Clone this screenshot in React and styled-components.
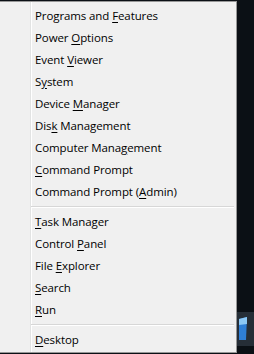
import React from "react";
import styled, { createGlobalStyle } from "styled-components";

const GlobalStyle = createGlobalStyle`
	html, body {
		margin: 0;
		padding: 0;
		background: #0b1015;
	}
	body {
		width: 254px;
		height: 354px;
		overflow: hidden;
	}
`;

const groups = [
	[
		["Programs and ", "F", "eatures"],
		["Power ", "O", "ptions"],
		["Event ", "V", "iewer"],
		["S", "y", "stem"],
		["Device ", "M", "anager"],
		["Dis", "k", " Management"],
		["Computer Mana", "g", "ement"],
		["", "C", "ommand Prompt"],
		["Command Prompt (", "A", "dmin)"],
	],
	[
		["", "T", "ask Manager"],
		["Control ", "P", "anel"],
		["File ", "E", "xplorer"],
		["", "S", "earch"],
		["", "R", "un"],
	],
	[["", "D", "esktop"]],
];

const Screen = styled.div`
	display: flex;
	width: 254px;
	height: 354px;
	padding-top: 1px;
	box-sizing: border-box;
`;

const Menu = styled.div`
	width: 237px;
	height: 352px;
	box-sizing: border-box;
	padding-top: 2px;
	background:
		linear-gradient(to right, transparent 30px, #e2e3e3 30px, #e2e3e3 31px, #ffffff 31px, #ffffff 32px, transparent 32px),
		#f0f0f0;
	border-top: 1px solid #979797;
	border-right: 1px solid #979797;
	border-bottom: 1px solid #979797;
	font-family: "Open Sans", "Noto Sans", sans-serif;
	font-size: 11.5px;
	color: #000;
`;

const Item = styled.div`
	height: 22px;
	display: flex;
	align-items: center;
	padding-left: 35px;
`;

const Label = styled.span`
	white-space: pre;
	letter-spacing: -0.1px;
`;

const Key = styled.span`
	text-decoration: underline;
	text-underline-offset: 2px;
	text-decoration-thickness: 1px;
`;

const Separator = styled.div`
	height: 8px;
	display: flex;
	align-items: center;
	padding-left: 31px;
	padding-right: 2px;

	&::after {
		content: "";
		flex: 1;
		height: 1px;
		background: #d7d7d7;
		box-shadow: 0 1px 0 #ffffff;
	}
`;

const Side = styled.div`
	flex: 1;
	display: flex;
	flex-direction: column;
	justify-content: flex-end;
	padding-bottom: 8px;
`;

const Taskbar = styled.div`
	height: 34px;
	background: #262e37;
	display: flex;
	align-items: center;
	padding-left: 1px;
`;

const TileIcon = () => (
	<svg width="10" height="26" viewBox="0 0 10 26">
		<path d="M1 3 L9 1 L8 24 L1 24 Z" fill="#2f7fd6" />
		<path d="M1 3 L9 1 L9 8 L1 9 Z" fill="#8cc8f5" />
	</svg>
);

const App = () => (
	<>
		<GlobalStyle />
		<Screen>
			<Menu>
				{groups.map((group, gi) => (
					<React.Fragment key={gi}>
						{gi > 0 && <Separator />}
						{group.map(([pre, key, post]) => (
							<Item key={pre + key + post}>
								<Label>
									{pre}
									<Key>{key}</Key>
									{post}
								</Label>
							</Item>
						))}
					</React.Fragment>
				))}
			</Menu>
			<Side>
				<Taskbar>
					<TileIcon />
				</Taskbar>
			</Side>
		</Screen>
	</>
);

export default App;
